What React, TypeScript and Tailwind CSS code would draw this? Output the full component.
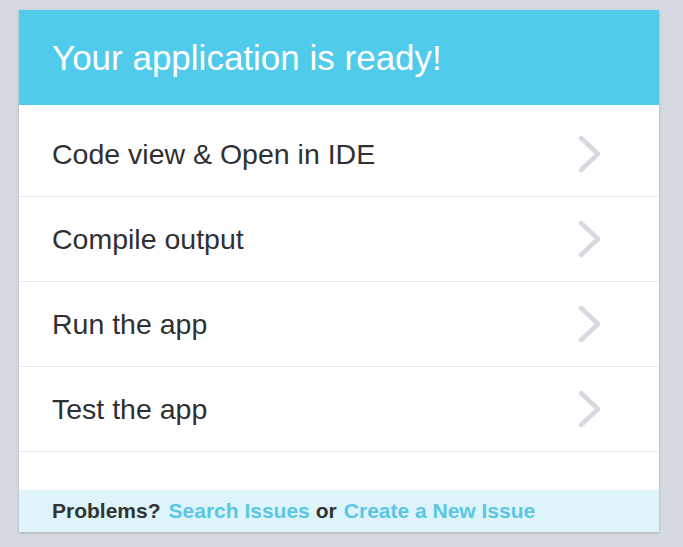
import React from "react";

const items = ["Code view & Open in IDE", "Compile output", "Run the app", "Test the app"];

function Chevron() {
  return (
    <svg width="28" height="40" viewBox="0 0 28 40" fill="none">
      <path d="M4 4 L21 20 L4 36" stroke="#d6d9df" strokeWidth="4.5" strokeLinecap="round" strokeLinejoin="round" />
    </svg>
  );
}

export default function App() {
  return (
    <div className="min-h-[547px] w-[683px] bg-[#d5d9e0] pt-[10px] pl-[19px]" style={{ fontFamily: "Arial, 'Liberation Sans', sans-serif" }}>
      <div className="w-[640px] bg-white shadow-[0_1px_3px_rgba(0,0,0,0.2)]">
        <div className="h-[95px] bg-[#50cbeb] flex items-center pl-[33px]">
          <h1 className="text-[35px] text-white leading-none">Your application is ready!</h1>
        </div>
        <div className="pt-[7px]">
          {items.map((t) => (
            <div key={t} className="h-[85px] border-b border-[#e8eaed] flex items-center justify-between pl-[33px] pr-[54px]">
              <span className="text-[28.5px] text-[#2f3033] leading-none">{t}</span>
              <Chevron />
            </div>
          ))}
        </div>
        <div className="h-[38px]" />
        <div className="h-[42px] bg-[#ddf4fb] flex items-center pl-[33px] text-[21px] font-bold">
          <span className="text-[#333]">Problems?</span>
          <span className="text-[#5bc6e2] ml-[8px]">Search Issues</span>
          <span className="text-[#333] ml-[6px]">or</span>
          <span className="text-[#5bc6e2] ml-[7px]">Create a New Issue</span>
        </div>
      </div>
    </div>
  );
}
